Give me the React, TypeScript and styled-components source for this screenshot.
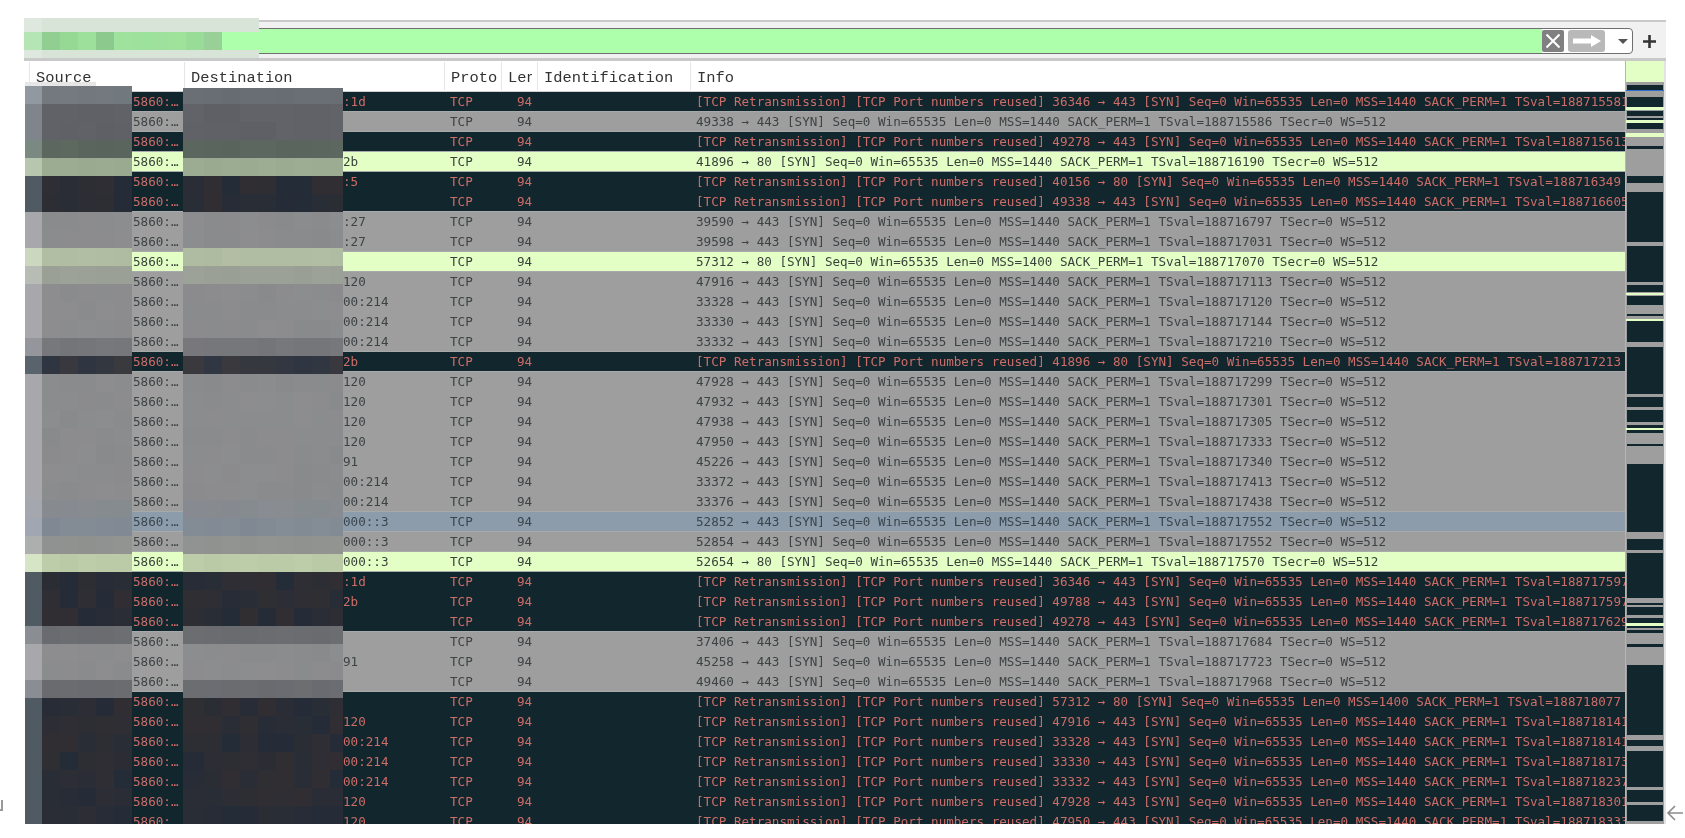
import React from "react";
import styled, { createGlobalStyle } from "styled-components";

type Kind = "d" | "g" | "l" | "b";

const BG: Record<Kind, string> = { d: "#12262d", g: "#9e9e9e", l: "#e4ffc6", b: "#8d9cab" };
const FG: Record<Kind, string> = { d: "#cb6d69", g: "#3d4244", l: "#38423a", b: "#3a464e" };
const RGB: Record<Kind, number[]> = {
  d: [18, 38, 45],
  g: [158, 158, 158],
  l: [228, 255, 198],
  b: [141, 156, 171],
};

const Global = createGlobalStyle`
  html, body { margin: 0; padding: 0; background: #fff; overflow: hidden; }
`;

const Page = styled.div`
  position: relative;
  width: 1685px;
  height: 838px;
  padding-top: 20px;
  box-sizing: border-box;
  background: #fff;
  overflow: hidden;
`;

const Toolbar = styled.div`
  display: flex;
  align-items: center;
  box-sizing: border-box;
  width: 1642px;
  height: 41px;
  margin-left: 24px;
  padding: 6px 0 4px;
  background: #f1f1f1;
  border-top: 2px solid #c9c9c9;
  border-bottom: 3px solid #c9c9c9;
`;

const FilterInput = styled.div`
  flex: 1;
  display: flex;
  align-items: center;
  height: 26px;
  box-sizing: border-box;
  background: #fff;
  border: 1px solid #6f6f6f;
  border-radius: 4px;
  overflow: hidden;
`;

const FilterText = styled.div`
  flex: 1;
  align-self: stretch;
  background: #aeffab;
`;

const ClearButton = styled.div`
  display: flex;
  align-items: center;
  justify-content: center;
  width: 22px;
  height: 22px;
  border-radius: 2px;
  background: #808080;
`;

const ApplyButton = styled.div`
  display: flex;
  align-items: center;
  justify-content: center;
  width: 37px;
  height: 22px;
  margin-left: 4px;
  border-radius: 3px;
  background: #b9b9b9;
`;

const Caret = styled.div`
  width: 0;
  height: 0;
  margin: 0 4px 0 13px;
  border-left: 5px solid transparent;
  border-right: 5px solid transparent;
  border-top: 5px solid #555;
`;

const PlusSlot = styled.div`
  display: flex;
  align-items: center;
  justify-content: center;
  width: 33px;
`;

const Body = styled.div`
  display: flex;
  height: 763px;
`;

const LeftGutter = styled.div`
  display: flex;
  align-items: flex-end;
  width: 28px;
  flex: none;
`;

const CornerMark = styled.div`
  width: 3px;
  height: 11px;
  margin: 0 0 13px 0;
  box-sizing: border-box;
  border-right: 2px solid #9a9a9a;
  border-bottom: 2px solid #9a9a9a;
`;

const Table = styled.div`
  width: 1597px;
  flex: none;
  overflow: hidden;
  background: #fff;
`;

const columns = "156px 260px 57px 36px 153px 935px";

const HeaderRow = styled.div`
  display: grid;
  grid-template-columns: ${columns};
  height: 31px;
  box-sizing: border-box;
  padding-top: 1px;
  border-bottom: 1px solid #cfcfcf;
`;

const HeaderCell = styled.div<{ $inset?: number; $clip?: number }>`
  box-sizing: border-box;
  height: 28px;
  margin-left: ${(p) => p.$inset ?? 0}px;
  padding-left: 6px;
  border-left: 1px solid #e6e6e6;
  overflow: hidden;
  white-space: nowrap;
  font: 15.4px/32px "Liberation Mono", monospace;
  color: #333;
  filter: blur(0.3px);
  margin-right: ${(p) => p.$clip ?? 0}px;
`;

const Rows = styled.div`
  height: 732px;
  overflow: hidden;
`;

const Row = styled.div<{ $kind: Kind; $edge: boolean }>`
  display: grid;
  grid-template-columns: ${columns};
  height: 20px;
  box-sizing: border-box;
  background: ${(p) => BG[p.$kind]};
  color: ${(p) => FG[p.$kind]};
  border-bottom: ${(p) => (p.$edge ? "1px solid #a6aaaa" : "none")};
  font: 12.6px/19px "DejaVu Sans Mono", monospace;
`;

const Cell = styled.div<{ $pad: number }>`
  padding-left: ${(p) => p.$pad}px;
  overflow: hidden;
  white-space: pre;
  filter: blur(0.3px);
`;

const Minimap = styled.div`
  width: 41px;
  flex: none;
  box-sizing: border-box;
  border-left: 1px solid #b5b5b5;
  border-right: 2px solid #e3e3e3;
  line-height: 0;
`;

const RightGutter = styled.div`
  display: flex;
  align-items: flex-end;
  flex: 1;
  padding-bottom: 3px;
`;

const Mosaic = styled.svg`
  position: absolute;
  left: 0;
  top: 0;
  pointer-events: none;
`;

const rowsData: [Kind, string, number, number, number, boolean?][] = [
  ["d", ":1d", 36346, 443, 188715581],
  ["g", "", 49338, 443, 188715586],
  ["d", "", 49278, 443, 188715613],
  ["l", "2b", 41896, 80, 188716190],
  ["d", ":5", 40156, 80, 188716349],
  ["d", "", 49338, 443, 188716605],
  ["g", ":27", 39590, 443, 188716797],
  ["g", ":27", 39598, 443, 188717031],
  ["l", "", 57312, 80, 188717070, true],
  ["g", "120", 47916, 443, 188717113],
  ["g", "00:214", 33328, 443, 188717120],
  ["g", "00:214", 33330, 443, 188717144],
  ["g", "00:214", 33332, 443, 188717210],
  ["d", "2b", 41896, 80, 188717213],
  ["g", "120", 47928, 443, 188717299],
  ["g", "120", 47932, 443, 188717301],
  ["g", "120", 47938, 443, 188717305],
  ["g", "120", 47950, 443, 188717333],
  ["g", "91", 45226, 443, 188717340],
  ["g", "00:214", 33372, 443, 188717413],
  ["g", "00:214", 33376, 443, 188717438],
  ["b", "000::3", 52852, 443, 188717552],
  ["g", "000::3", 52854, 443, 188717552],
  ["l", "000::3", 52654, 80, 188717570],
  ["d", ":1d", 36346, 443, 188717597],
  ["d", "2b", 49788, 443, 188717597],
  ["d", "", 49278, 443, 188717629],
  ["g", "", 37406, 443, 188717684],
  ["g", "91", 45258, 443, 188717723],
  ["g", "", 49460, 443, 188717968],
  ["d", "", 57312, 80, 188718077, true],
  ["d", "120", 47916, 443, 188718141],
  ["d", "00:214", 33328, 443, 188718141],
  ["d", "00:214", 33330, 443, 188718173],
  ["d", "00:214", 33332, 443, 188718237],
  ["d", "120", 47928, 443, 188718301],
  ["d", "120", 47950, 443, 188718333],
];

const info = (k: Kind, sp: number, dp: number, ts: number, m?: boolean) =>
  (k === "d" ? "[TCP Retransmission] [TCP Port numbers reused] " : "") +
  `${sp} → ${dp} [SYN] Seq=0 Win=65535 Len=0 MSS=${m ? 1400 : 1440} SACK_PERM=1 TSval=${ts} TSecr=0 WS=512`;

/* overview strip: [from y, to y, kind], page coordinates */
const strip: [number, number, Kind | "w"][] = [
  [61, 82, "l"], [85, 90, "d"], [90, 91, "w"], [97, 107, "d"], [107, 110, "l"], [111, 116, "d"],
  [118, 120, "d"], [120, 123, "l"], [123, 129, "d"], [133, 137, "l"], [146, 149, "d"], [176, 183, "d"],
  [192, 242, "d"], [246, 282, "d"], [285, 292, "d"], [293, 295, "l"], [296, 305, "d"], [314, 316, "d"],
  [319, 321, "l"], [321, 342, "d"], [347, 394, "d"], [397, 407, "d"], [410, 422, "d"], [425, 428, "d"],
  [428, 430, "l"], [430, 433, "d"], [444, 446, "d"], [464, 532, "d"], [539, 550, "d"], [553, 598, "d"],
  [603, 605, "d"], [607, 615, "d"], [618, 623, "d"], [623, 626, "l"], [626, 628, "d"], [630, 633, "d"],
  [644, 647, "d"], [665, 735, "d"], [740, 746, "d"], [751, 787, "d"], [790, 802, "d"], [805, 821, "d"],
];

const rowAt = (y: number): number[] => {
  if (y < 94) return [255, 255, 255];
  const i = Math.min(36, Math.floor((y - 92) / 20));
  return RGB[rowsData[i][0]];
};

const bandAverage = (y0: number, y1: number) => {
  const sum = [0, 0, 0];
  for (let y = y0; y < y1; y++) {
    const c = rowAt(y);
    sum[0] += c[0];
    sum[1] += c[1];
    sum[2] += c[2];
  }
  return sum.map((v) => v / (y1 - y0));
};

const noise = (a: number, b: number) => {
  const s = Math.sin(a * 12.9898 + b * 78.233) * 43758.5453;
  return s - Math.floor(s) - 0.5;
};

/* piecewise response of the pixelation to the colour beneath it */
const green = (g: number) => (g < 158 ? g * 0.79 + 15 : g * 0.65 + 37);
const blue = (b: number) => (b < 158 ? b * 0.786 + 18 : b * 0.65 + 39);

const tile = (avg: number[], x: number, y: number, pale: boolean) => {
  const n = noise(x, y);
  const dark = avg[1] < 80;
  const out = pale
    ? [avg[0] * 0.64 + 67, avg[1] * 0.64 + 66, avg[2] * 0.64 + 70]
    : [
        avg[0] * 0.69 + 30 + (dark ? n * 14 : n * 4),
        green(avg[1]) + n * 3,
        blue(avg[2]) - (dark ? n * 6 : -n * 3),
      ];
  return `rgb(${out.map((v) => Math.round(v)).join(",")})`;
};

const bands = (top: number) => {
  const list: [number, number][] = [];
  let y = top;
  const firstEnd = 104;
  list.push([y, firstEnd]);
  y = firstEnd;
  while (y < 824) {
    list.push([y, Math.min(y + 18, 824)]);
    y += 18;
  }
  return list;
};

const srcXs = [25, 42, 60, 78, 96, 114, 132];
const dstXs = [183, 204, 222, 240, 258, 276, 294, 312, 330, 343];
const topGreens = ["#b5e5b4", "#90cf91", "#95d995", "#9ce09b", "#8cc98d", "#9ee29d", "#9de29c", "#9ee19d", "#9ee29c", "#98dc98", "#98d098"];

const MosaicTiles = () => (
  <Mosaic width={1685} height={838}>
    <rect x={24} y={18} width={235} height={14} fill="#d9e4d9" />
    <rect x={24} y={18} width={18} height={14} fill="#dfe8df" />
    <rect x={24} y={50} width={235} height={8} fill="#d9e4d9" />
    <rect x={24} y={50} width={18} height={8} fill="#dfe8df" />
    {topGreens.map((c, i) => (
      <rect key={c + i} x={24 + i * 18} y={32} width={18} height={18} fill={c} />
    ))}
    <rect x={25} y={82} width={71} height={4} fill="#e6e6e6" />
    {bands(86).map(([y0, y1]) =>
      srcXs.slice(0, -1).map((x, i) => (
        <rect
          key={`s${x}-${y0}`}
          x={x}
          y={y0}
          width={srcXs[i + 1] - x}
          height={y1 - y0}
          fill={tile(bandAverage(y0, y1), x, y0, i === 0)}
        />
      ))
    )}
    {bands(88).map(([y0, y1]) =>
      dstXs.slice(0, -1).map((x, i) => (
        <rect
          key={`d${x}-${y0}`}
          x={x}
          y={y0}
          width={dstXs[i + 1] - x}
          height={y1 - y0}
          fill={tile(bandAverage(y0, y1), x + 7, y0, false)}
        />
      ))
    )}
  </Mosaic>
);

export default function App() {
  return (
    <Page>
      <Global />
      <Toolbar>
        <FilterInput>
          <FilterText />
          <ClearButton>
            <svg width="16" height="16" viewBox="0 0 16 16">
              <path d="M1.5 1.5 14.5 14.5M14.5 1.5 1.5 14.5" stroke="#fff" strokeWidth="2" fill="none" />
            </svg>
          </ClearButton>
          <ApplyButton>
            <svg width="30" height="14" viewBox="0 0 30 14">
              <path d="M1 4.5H19V1L29 7 19 13V9.5H1Z" fill="#fff" />
            </svg>
          </ApplyButton>
          <Caret />
        </FilterInput>
        <PlusSlot>
          <svg width="13" height="13" viewBox="0 0 13 13">
            <path d="M6.5 0V13M0 6.5H13" stroke="#333" strokeWidth="2.6" />
          </svg>
        </PlusSlot>
      </Toolbar>
      <Body>
        <LeftGutter>
          <CornerMark />
        </LeftGutter>
        <Table>
          <HeaderRow>
            <HeaderCell $inset={1}>Source</HeaderCell>
            <HeaderCell>Destination</HeaderCell>
            <HeaderCell $clip={4}>Proto</HeaderCell>
            <HeaderCell $clip={5}>Len</HeaderCell>
            <HeaderCell>Identification</HeaderCell>
            <HeaderCell>Info</HeaderCell>
          </HeaderRow>
          <Rows>
            {rowsData.map(([kind, dest, sp, dp, ts, m], i) => (
              <Row key={i} $kind={kind} $edge={i < 36 && rowsData[i + 1][0] !== kind}>
                <Cell $pad={105}>5860:…</Cell>
                <Cell $pad={159}>{dest}</Cell>
                <Cell $pad={6}>TCP</Cell>
                <Cell $pad={16}>94</Cell>
                <Cell $pad={6} />
                <Cell $pad={6}>{info(kind, sp, dp, ts, m)}</Cell>
              </Row>
            ))}
          </Rows>
        </Table>
        <Minimap>
          <svg width="38" height="763" viewBox="0 61 38 763">
            <rect x="0" y="61" width="38" height="763" fill="#9e9e9e" />
            {strip.map(([a, b, k]) => (
              <rect
                key={a}
                x={k === "d" ? 1 : 0}
                y={a}
                width={k === "d" ? 36 : 38}
                height={b - a}
                fill={k === "w" ? "#2a6fd0" : BG[k]}
              />
            ))}
          </svg>
        </Minimap>
        <RightGutter>
          <svg width="17" height="16" viewBox="0 0 17 16">
            <path d="M17 8H2M9 1 2 8l7 7" stroke="#8a8a8a" strokeWidth="1.6" fill="none" />
          </svg>
        </RightGutter>
      </Body>
      <MosaicTiles />
    </Page>
  );
}
